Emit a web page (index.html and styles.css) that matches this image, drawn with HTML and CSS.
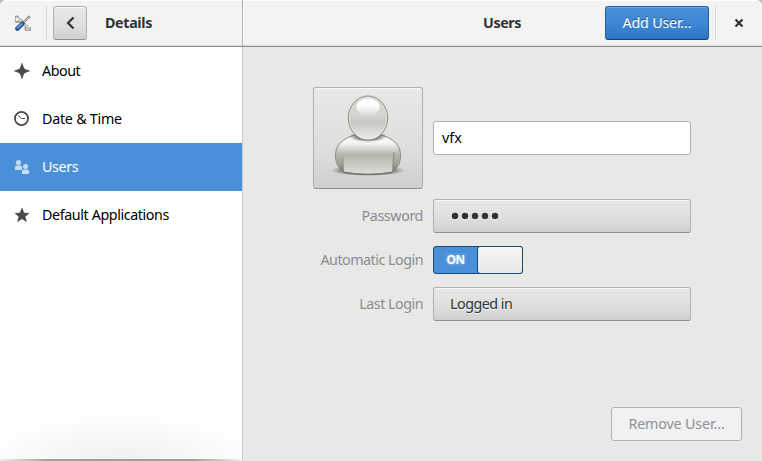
FILE: index.html
```html
<!DOCTYPE html>
<html lang="en">
<head>
<meta charset="utf-8">
<title>Users</title>
<link rel="stylesheet" href="styles.css">
</head>
<body>
<div class="window">
  <header class="titlebar">
    <div class="side-head">
      <svg class="app-icon" width="16" height="16" viewBox="0 0 16 16">
        <path d="M4 4 L12.500 12.500" stroke="#92948c" stroke-width="3"/>
        <path d="M2.200 1.200 A3 3 0 1 0 5.600 4.400 M2.200 1.200 L4 3 M10.800 12 A2.600 2.600 0 1 0 15.200 12.200 M12.400 12.600 L14 14.200" fill="none" stroke="#9b9d96" stroke-width="1.700"/>
        <path d="M4 4 L13 13" stroke="#e6e7e3" stroke-width="1.200"/>
        <path d="M7.500 8.500 L14.800 1.200" stroke="#85877f" stroke-width="2.400"/>
        <path d="M8 8 L14.300 1.700" stroke="#d8dad5" stroke-width=".9"/>
        <path d="M2.400 13.600 L7.300 8.700" stroke="#204a87" stroke-width="4.400" stroke-linecap="round"/>
        <path d="M2.500 13.200 L7 8.900" stroke="#4b82c5" stroke-width="2.500" stroke-linecap="round"/>
        <path d="M2.600 12.300 L6 9" stroke="#9abbe2" stroke-width=".8"/>
      </svg>
      <i class="sep"></i>
      <button class="btn back" aria-label="Back"><svg width="16" height="16" viewBox="0 0 16 16"><path d="M11.500 2.500 L6 8 L11.500 13.500" fill="none" stroke="#2e3436" stroke-width="2.200"/></svg></button>
      <span class="title t-details">Details</span>
    </div>
    <div class="main-head">
      <span class="title t-users">Users</span>
      <button class="btn suggested"><span class="t-add">Add User…</span></button>
      <i class="sep"></i>
      <svg class="close" width="10" height="10" viewBox="0 0 10 10"><path d="M1.500 1.500 L8.500 8.500 M8.500 1.500 L1.500 8.500" stroke="#2e3436" stroke-width="2.200"/></svg>
    </div>
  </header>
  <div class="body">
    <nav class="sidebar">
      <a class="row"><svg width="16" height="16" viewBox="0 0 16 16"><path d="M8 1.200 Q9 4.500 10 6 Q11.500 7 14.800 8 Q11.500 9 10 10 Q9 11.500 8 14.800 Q7 11.500 6 10 Q4.500 9 1.200 8 Q4.500 7 6 6 Q7 4.500 8 1.200Z" fill="#4a4a4a" stroke="#4a4a4a" stroke-width="1.200"/></svg><span class="t-about">About</span></a>
      <a class="row"><svg width="16" height="16" viewBox="0 0 16 16"><circle cx="7.500" cy="7.500" r="6.600" fill="none" stroke="#4a4a4a" stroke-width="1.800"/><path d="M4 4.400 L7.500 7.500 H11" fill="none" stroke="#4a4a4a"/></svg><span class="t-date">Date &amp; Time</span></a>
      <a class="row selected"><svg width="16" height="16" viewBox="0 0 16 16"><g fill="#c8dcf3"><circle cx="4.500" cy="3.500" r="2.500"/><path d="M1 11 V8 Q1 6.400 2.700 6.400 H6.300 Q8 6.400 8 8 V11Z"/><circle cx="11.500" cy="7.500" r="2.500"/><path d="M8 15 V12 Q8 10.400 9.700 10.400 H13.300 Q15 10.400 15 12 V15Z"/></g></svg><span class="t-nav-users">Users</span></a>
      <a class="row"><svg width="16" height="16" viewBox="0 0 16 16"><path d="M8 .8 L10 6 L15.200 6.300 L11.200 9.600 L12.500 14.700 L8 11.800 L3.500 14.700 L4.800 9.600 L.8 6.300 L6 6Z" fill="#4a4a4a" stroke="#4a4a4a" stroke-width=".4"/></svg><span class="t-default">Default Applications</span></a>
    </nav>
    <main class="panel">
      <div class="form">
        <button class="btn avatar" aria-label="Change picture">
          <svg width="96" height="96" viewBox="0 0 96 96">
            <defs>
              <radialGradient id="shade"><stop offset=".65" stop-color="#555753" stop-opacity=".75"/><stop offset="1" stop-color="#555753" stop-opacity="0"/></radialGradient>
              <linearGradient id="torso" x1="0" y1="0" x2="0" y2="1"><stop offset="0" stop-color="#fff"/><stop offset=".25" stop-color="#f2f2f0"/><stop offset=".52" stop-color="#b5b5ab"/><stop offset="1" stop-color="#deded8"/></linearGradient>
              <linearGradient id="arm" x1="0" y1="0" x2="0" y2="1"><stop offset=".1" stop-color="#777970" stop-opacity="0"/><stop offset="1" stop-color="#62645c" stop-opacity=".85"/></linearGradient>
              <linearGradient id="head" x1="0" y1="0" x2="0" y2="1"><stop offset="0" stop-color="#d2d4d0"/><stop offset=".45" stop-color="#d2d4d0"/><stop offset=".6" stop-color="#c6c9c4"/><stop offset="1" stop-color="#eceeeb"/></linearGradient>
              <linearGradient id="glow" x1="0" y1="0" x2="0" y2="1"><stop offset="0" stop-color="#fff"/><stop offset=".4" stop-color="#fff" stop-opacity=".95"/><stop offset="1" stop-color="#fff" stop-opacity=".15"/></linearGradient>
              <radialGradient id="neck"><stop offset=".6" stop-color="#555753" stop-opacity=".7"/><stop offset="1" stop-color="#555753" stop-opacity="0"/></radialGradient>
            </defs>
            <ellipse cx="48" cy="80.500" rx="37" ry="5.500" fill="url(#shade)"/>
            <path d="M15.500 65 C15.500 51 31 43.500 48 43.500 S80.500 51 80.500 65 C80.500 73 78 78 72 82 Q48 86.500 24 82 C18 78 15.500 73 15.500 65Z" fill="url(#torso)" stroke="#888a85"/>
            <path d="M16 66 Q17 77 23.500 82 L22.800 65Z M80 66 Q79 77 72.500 82 L73.200 62Z" fill="url(#arm)"/>
            <path d="M22.800 67 L23.500 82 M73.800 62 L72.500 82" stroke="#85877f" stroke-width=".8"/>
            <path d="M24 82.500 Q48 86.500 72 82.500" fill="none" stroke="#6d6f68"/>
            <ellipse cx="48" cy="46.500" rx="19" ry="5.500" fill="url(#neck)"/>
            <ellipse cx="48" cy="28" rx="19.700" ry="22" fill="url(#head)" stroke="#888a85"/>
            <ellipse cx="48" cy="28" rx="18.700" ry="21" fill="none" stroke="#fff" stroke-opacity=".35"/>
            <ellipse cx="48" cy="17" rx="11.700" ry="8.700" fill="url(#glow)"/>
          </svg>
        </button>
        <input class="entry t-vfx" value="vfx" aria-label="Name">
        <span class="label t-pass">Password</span>
        <button class="btn field"><svg class="dots" width="50" height="8" viewBox="0 0 50 8"><g fill="#fff"><circle cx="4" cy="4.800" r="3.100"/><circle cx="14" cy="4.800" r="3.100"/><circle cx="24" cy="4.800" r="3.100"/><circle cx="34" cy="4.800" r="3.100"/><circle cx="44" cy="4.800" r="3.100"/></g><g fill="#2e3436"><circle cx="4" cy="4" r="3.200"/><circle cx="14" cy="4" r="3.200"/><circle cx="24" cy="4" r="3.200"/><circle cx="34" cy="4" r="3.200"/><circle cx="44" cy="4" r="3.200"/></g></svg></button>
        <span class="label t-auto">Automatic Login</span>
        <div class="switch"><span class="on">ON</span><span class="knob"></span></div>
        <span class="label t-last">Last Login</span>
        <button class="btn field"><span class="t-logged">Logged in</span></button>
      </div>
      <button class="btn remove"><span class="t-remove">Remove User…</span></button>
    </main>
  </div>
</div>
</body>
</html>
```
FILE: styles.css
```css
* { box-sizing: border-box; }
html { background: #b9bbb8; }
body { margin: 0; font: 14.3px/20px "Noto Sans", sans-serif; color: #000; }
button, input { font: inherit; margin: 0; }
span { white-space: nowrap; }
.window { width: 762px; height: 461px; border-radius: 6px 6px 0 0; overflow: hidden; background: #e8e8e7; display: flex; flex-direction: column; }
.titlebar { height: 47px; flex: none; display: flex; background: linear-gradient(#fff 0 1px, #f3f3f3 1px 45px, #dcdddb 45px); border-bottom: 1px solid #8b8d87; }
.side-head { width: 243px; border-right: 1px solid #b5b6b3; display: flex; align-items: center; }
.app-icon { margin: 0 15px; }
.sep { width: 1px; height: 34px; background: #d9dad8; }
.btn { height: 34px; padding: 0; display: flex; align-items: center; justify-content: center; color: #2e3436; border: 1px solid #b0b1ae; border-bottom-color: #8e8f8c; border-radius: 3px; background: linear-gradient(#e8e8e7, #dededc 60%, #cfcfcd); box-shadow: inset 0 1px #f8f8f8; text-shadow: 0 1px rgba(255,255,255,.75); }
.back { width: 34px; margin-left: 6px; }
.title { font-weight: 700; color: #2e3436; }
.side-head .title { margin-left: 18px; }
.main-head { flex: 1; display: flex; align-items: center; }
.main-head .title { margin-left: 240px; width: 122px; }
.suggested { width: 104px; color: #fff; border-color: #1c5fa8; border-bottom-color: #15477d; background: linear-gradient(#4a90d9, #3c84d2 60%, #2a76c6); box-shadow: inset 0 1px #76abe2; text-shadow: 0 -1px rgba(0,0,0,.45); }
.main-head .sep { margin-left: 6px; }
.close { margin-left: 18px; }
.body { flex: 1; display: flex; }
.sidebar { width: 243px; border-right: 1px solid #cbccca; background: linear-gradient(90deg, rgba(139,142,135,.1), #a0a19b 20% 80%, rgba(139,142,135,.1)) bottom / 100% 2px no-repeat, radial-gradient(ellipse 145px 50px at 50% 100%, #eff0ef, #fff) #fff; }
.row { height: 48px; padding-left: 14px; display: flex; align-items: center; gap: 12px; }
.selected { background: #4a90d9; color: #fff; }
.panel { flex: 1; display: flex; flex-direction: column; justify-content: space-between; padding: 40px 20px 20px 70px; }
.form { display: grid; grid-template-columns: 110px 258px; grid-template-rows: 102px 34px 34px 34px; gap: 10px; align-items: center; }
.avatar { width: 110px; height: 102px; }
.entry { width: 258px; height: 34px; padding: 0 8px 1px; border: 1px solid #b0b1ae; border-radius: 3px; background: #fff; }
.label { justify-self: end; color: #8b8e8f; }
.field { width: 258px; justify-content: flex-start; padding-left: 16px; }
.dots { margin-left: 1px; }
.switch { width: 90px; height: 28px; border: 1px solid #1c4876; border-radius: 3px; background: #4a90d9; display: flex; }
.on { width: 45px; text-align: center; font-size: 12px; line-height: 26px; font-weight: 600; letter-spacing: -.4px; color: #fff; text-shadow: 0 0 3px rgba(255,255,255,.8); }
.knob { width: 46px; flex: none; margin: -1px -1px -1px auto; border: 1px solid #1c4876; border-radius: 3px; background: linear-gradient(#f6f6f6, #e8e8e7); box-shadow: inset 0 1px #fff; }
.remove { align-self: flex-end; width: 131px; color: #8f9292; background: #f1f1f1; border-color: #b0b1ae; box-shadow: none; text-shadow: none; }

/* per-label tracking */
.t-details { letter-spacing: -.35px; }
.t-users { letter-spacing: -.4px; }
.t-add { letter-spacing: -.2px; }
.t-remove { letter-spacing: -.15px; }
.t-about { letter-spacing: -.45px; }
.t-date { letter-spacing: -.25px; }
.t-nav-users { letter-spacing: -.35px; }
.t-default, .t-pass { letter-spacing: -.4px; }
.t-auto, .t-last, .t-logged { letter-spacing: -.5px; }
```
